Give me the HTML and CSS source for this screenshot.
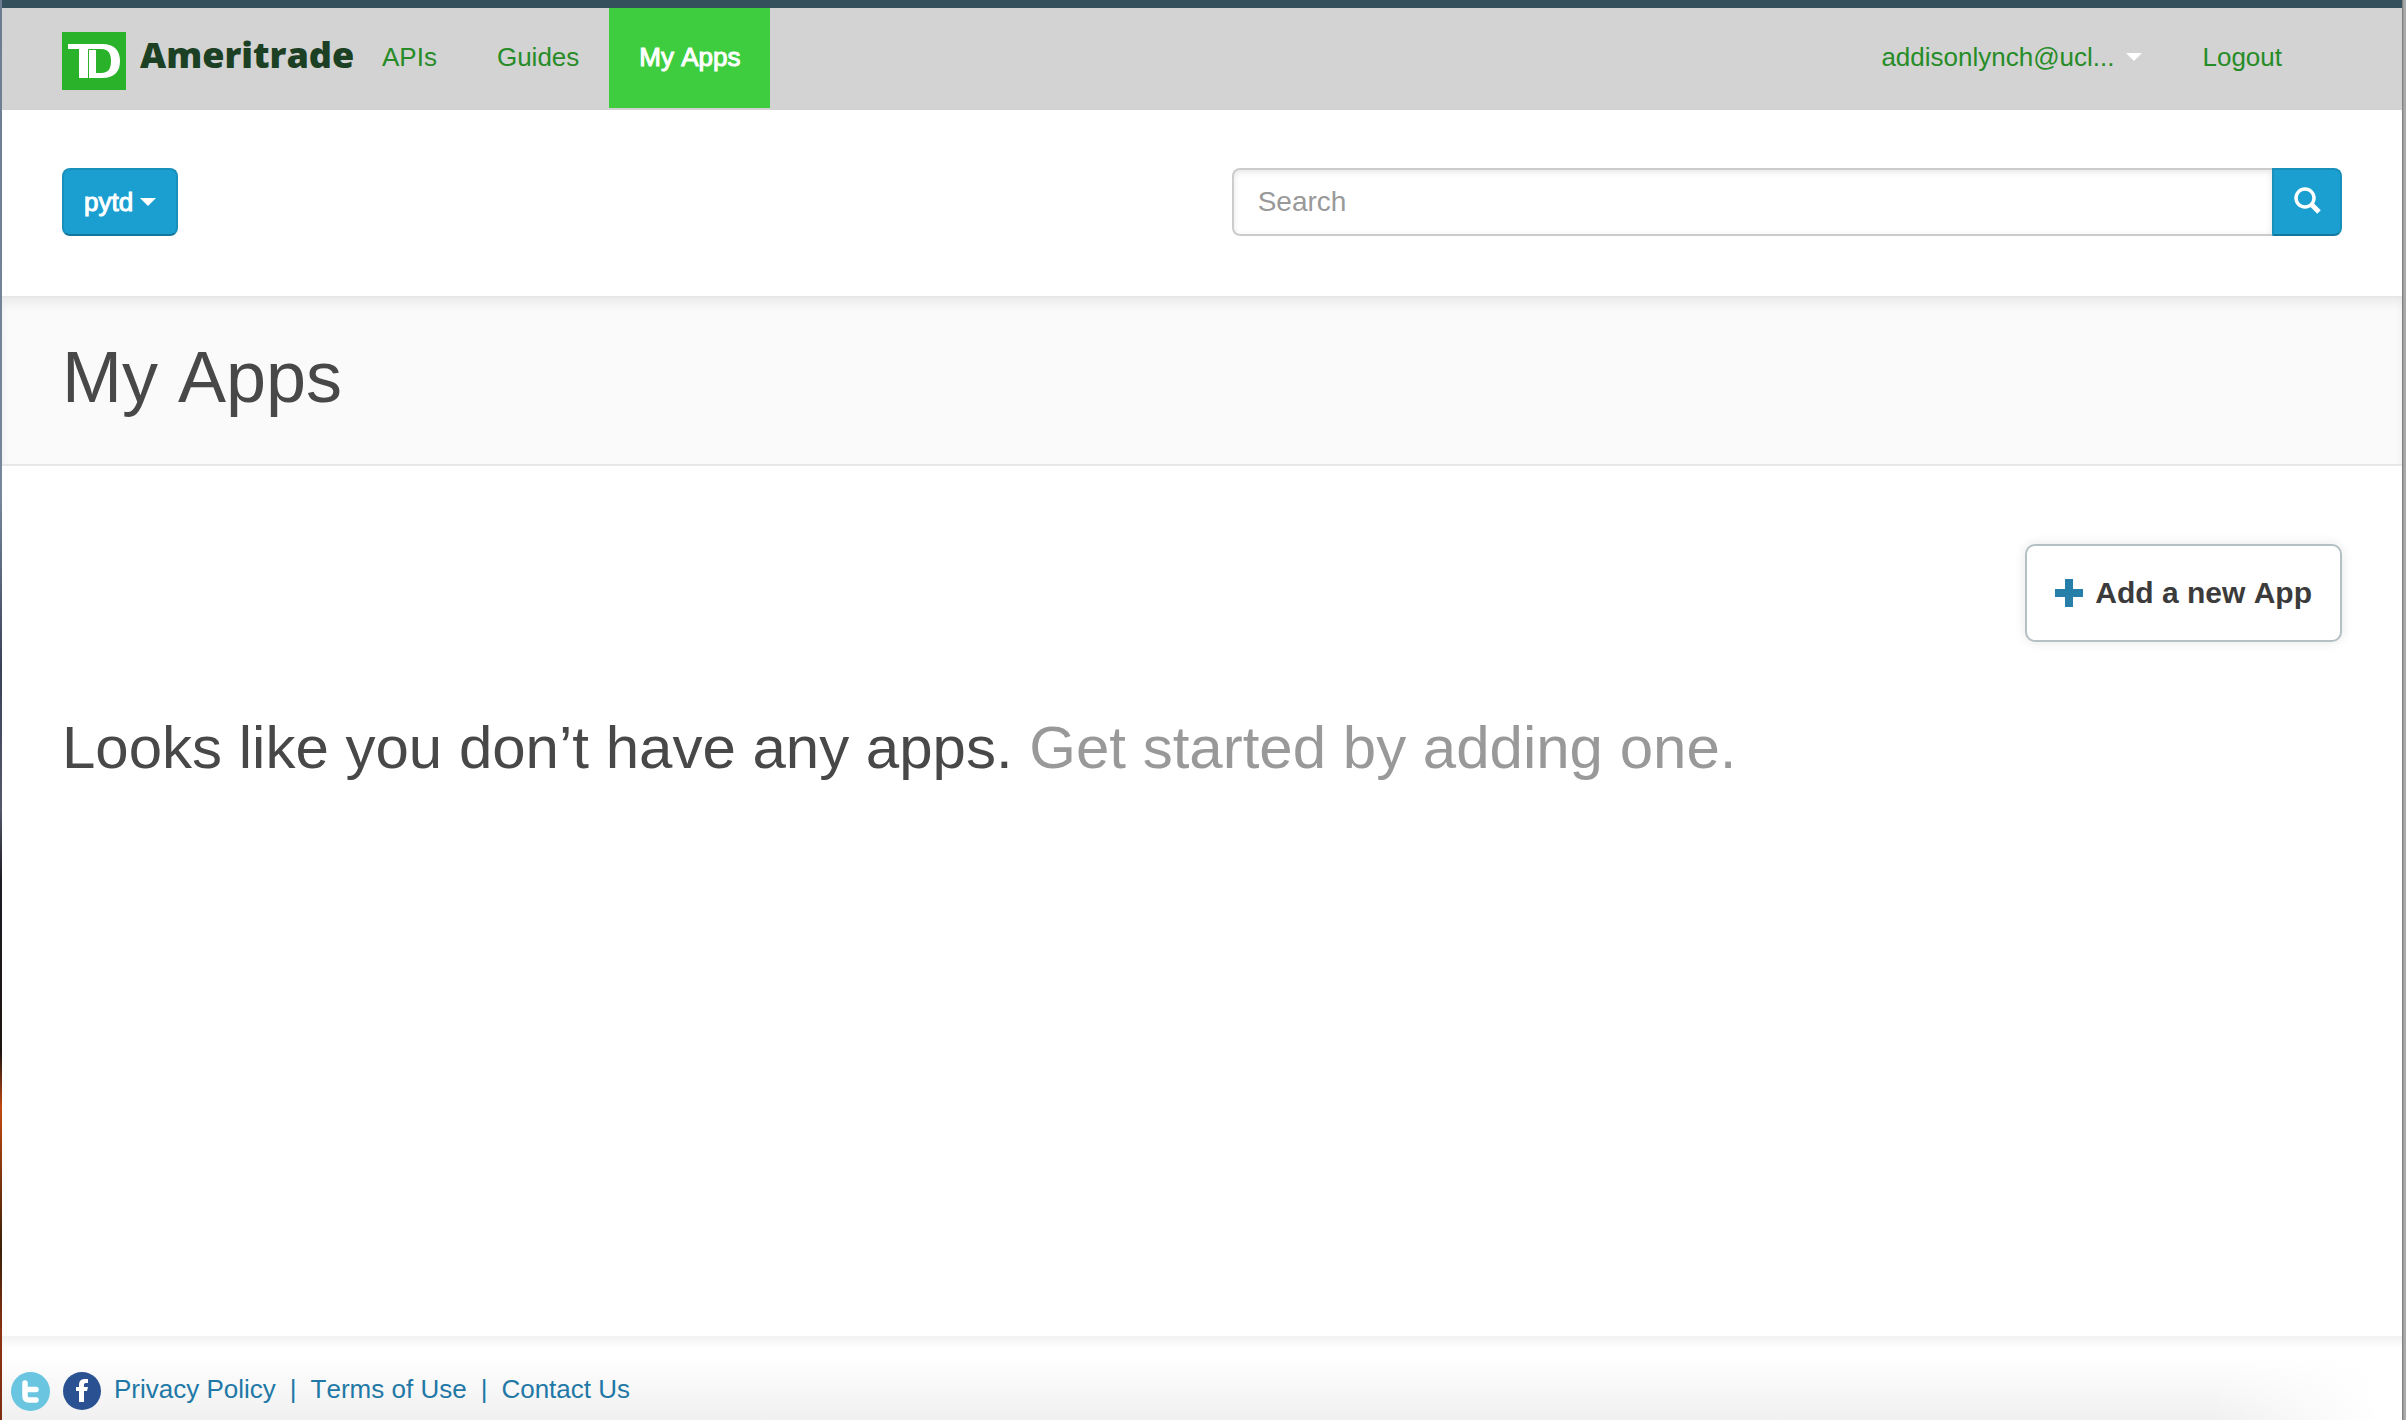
FILE: index.html
```html
<!DOCTYPE html>
<html lang="en">
<head>
<meta charset="utf-8">
<meta name="viewport" content="width=device-width, initial-scale=1">
<title>My Apps</title>
<link rel="stylesheet" href="styles.css">
</head>
<body>
<div class="page">
  <header class="navbar">
    <a class="brand" href="#">
      <svg class="brand-mark" viewBox="0 0 64 58" aria-hidden="true">
        <rect width="64" height="58" fill="#2ab22b"/>
        <path fill="#fff" d="M6 12H40C53 12 58 19 58 29S53 46 40 46H17V17H6ZM34 17V41H39C47 41 49 36 49 29S47 17 39 17Z"/>
        <path fill="none" stroke="#2ab22b" d="M26.500 46V17.500H34"/>
      </svg>
      <span class="brand-name">Ameritrade</span>
    </a>
    <nav class="nav">
      <a href="#">APIs</a>
      <a href="#">Guides</a>
      <a class="active" href="#">My Apps</a>
    </nav>
    <nav class="nav nav-user">
      <a href="#">addisonlynch@ucl... <span class="caret"></span></a>
      <a href="#">Logout</a>
    </nav>
  </header>
  <div class="toolbar">
    <button class="btn-primary" type="button">pytd <span class="caret"></span></button>
    <form class="search">
      <input class="search-input" type="search" placeholder="Search" aria-label="Search">
      <button class="search-button" type="button" aria-label="Search">
        <svg width="28" height="28" viewBox="0 0 28 28" fill="none" stroke="#fff" aria-hidden="true">
          <circle cx="12" cy="12" r="9" stroke-width="3.500"/>
          <path d="M18 18l8 8" stroke-width="5"/>
        </svg>
      </button>
    </form>
  </div>
  <div class="title-bar"><h1>My Apps</h1></div>
  <main class="content">
    <div class="actions">
      <button class="add-app" type="button">
        <svg width="28" height="28" viewBox="0 0 28 28" fill="#267fa8" aria-hidden="true"><path d="M10 0h8v10h10v8H18v10h-8V18H0v-8h10z"/></svg>
        Add a new App
      </button>
    </div>
    <h2>Looks like you don’t have any apps. <span class="muted">Get started by adding one.</span></h2>
  </main>
  <footer class="footer">
    <a class="social" href="#" aria-label="Twitter">
      <svg width="39" height="39" viewBox="0 0 39 39" aria-hidden="true">
        <circle cx="19.500" cy="19.500" r="19.500" fill="#69c5e0"/>
        <path d="M14 11v13q0 4 4 4h7M14 17.500h11" fill="none" stroke="#fff" stroke-width="5.500" stroke-linecap="round"/>
      </svg>
    </a>
    <a class="social" href="#" aria-label="Facebook">
      <svg width="38" height="38" viewBox="0 0 38 38" aria-hidden="true">
        <circle cx="19" cy="19" r="19" fill="#2a5292"/>
        <path d="M16 30V19h-3v-4h3v-2c0-4 2-6 6-6h3v4h-2c-2 0-2 1-2 2v2h4l-1 4h-3v11z" fill="#fff"/>
      </svg>
    </a>
    <div class="links">
      <a href="#">Privacy Policy</a><span>|</span><a href="#">Terms of Use</a><span>|</span><a href="#">Contact Us</a>
    </div>
  </footer>
</div>
</body>
</html>
```
FILE: styles.css
```css
* { box-sizing: border-box; }

body {
  margin: 0;
  padding: 0 4px 0 2px;
  min-height: 100vh;
  display: flex;
  font: 26px/40px "Liberation Sans", Arial, sans-serif;
  font-kerning: none;
  color: #484848;
  background:
    linear-gradient(#6c7c90 0%, #76879c 35%, #3a4258 47%, #55586a 57%, #1c1c24 62%, #1c1410 74%, #c04a12 78%, #3a2008 88%, #8c3412 94%, #7c2c10 100%) left / 2px 100% no-repeat,
    linear-gradient(90deg, #747474, #a9aaac 50%) right / 4px 100% no-repeat;
}

a { text-decoration: none; }
button, input { font: inherit; font-kerning: none; margin: 0; }
h1, h2 { margin: 0; font-weight: normal; }
svg { display: block; flex: none; }

.page {
  flex: 1;
  min-width: 0;
  display: flex;
  flex-direction: column;
  background: #fff;
  border-top: 8px solid #33505c;
}

.navbar {
  display: flex;
  height: 102px;
  padding: 0 90px 2px 60px;
  background: #d3d3d3;
}

.brand { display: flex; align-items: flex-start; gap: 14px; width: 290px; padding-top: 24px; }
.brand-mark { width: 64px; height: 58px; }
.brand-name { font: 800 36px/46px "Open Sans", sans-serif; color: #1b4023; }

.nav { display: flex; }
.nav a {
  display: flex;
  align-items: center;
  gap: 12px;
  padding: 0 30px 2px;
  color: #278c27;
}
.nav .active { color: #fff; background: #3dcd3f; -webkit-text-stroke: 1px #fff; }
.nav-user { margin-left: auto; }

.caret {
  border: 8px solid transparent;
  border-top-color: #fff;
  border-bottom: 0;
}

.toolbar {
  display: flex;
  justify-content: space-between;
  padding: 58px 60px 60px;
}

.btn-primary, .search-button {
  display: flex;
  align-items: center;
  justify-content: center;
  height: 68px;
  color: #fff;
  background: #1b9fd0;
  border: 2px solid #1990bb;
  border-bottom-color: #15779b;
}
.btn-primary { gap: 7px; padding: 0 20px; border-radius: 8px; -webkit-text-stroke: 1px #fff; }

.search { display: flex; width: 48.700%; }
.search-input {
  flex: 1;
  min-width: 0;
  height: 68px;
  padding: 0 24px;
  font-size: 28px;
  border: 2px solid #ccc;
  border-right: 0;
  border-radius: 8px 0 0 8px;
  box-shadow: inset 0 2px 6px #0000001a;
}
.search-input::placeholder { color: #999; opacity: 1; }
.search-button { width: 70px; padding: 0 0 4px; border-radius: 0 8px 8px 0; }

.title-bar {
  padding: 34px 60px 42px;
  background: #fafafa;
  border: solid #e7e7e7;
  border-width: 2px 0;
  box-shadow: inset 0 6px 8px #0000000f;
}
h1 { font-size: 72px; line-height: 90px; }

.content { flex: 1; padding: 78px 60px; }
.actions { display: flex; justify-content: flex-end; margin-bottom: 66px; }
.add-app {
  display: flex;
  align-items: center;
  gap: 12px;
  height: 98px;
  padding: 0 28px;
  font-size: 30px;
  font-weight: bold;
  color: #3b3b3b;
  background: #fff;
  border: 2px solid #b4c0c4;
  border-radius: 10px;
  box-shadow: 0 0 12px #0000001a;
}
h2 { font-size: 60px; line-height: 80px; }
.muted { color: #999; }

.footer {
  display: flex;
  align-items: flex-start;
  height: 84px;
  padding: 36px 9px 0;
  background:
    linear-gradient(#f2f2f2, #f2f2f200 12px),
    linear-gradient(90deg, #fff0 92%, #fff 99%),
    linear-gradient(#fff 20px, #f0f0f0);
}
.social { margin-right: 13px; }
.links { display: flex; gap: 14px; line-height: 34px; color: #1f78a6; }
.links a { color: inherit; }
```
